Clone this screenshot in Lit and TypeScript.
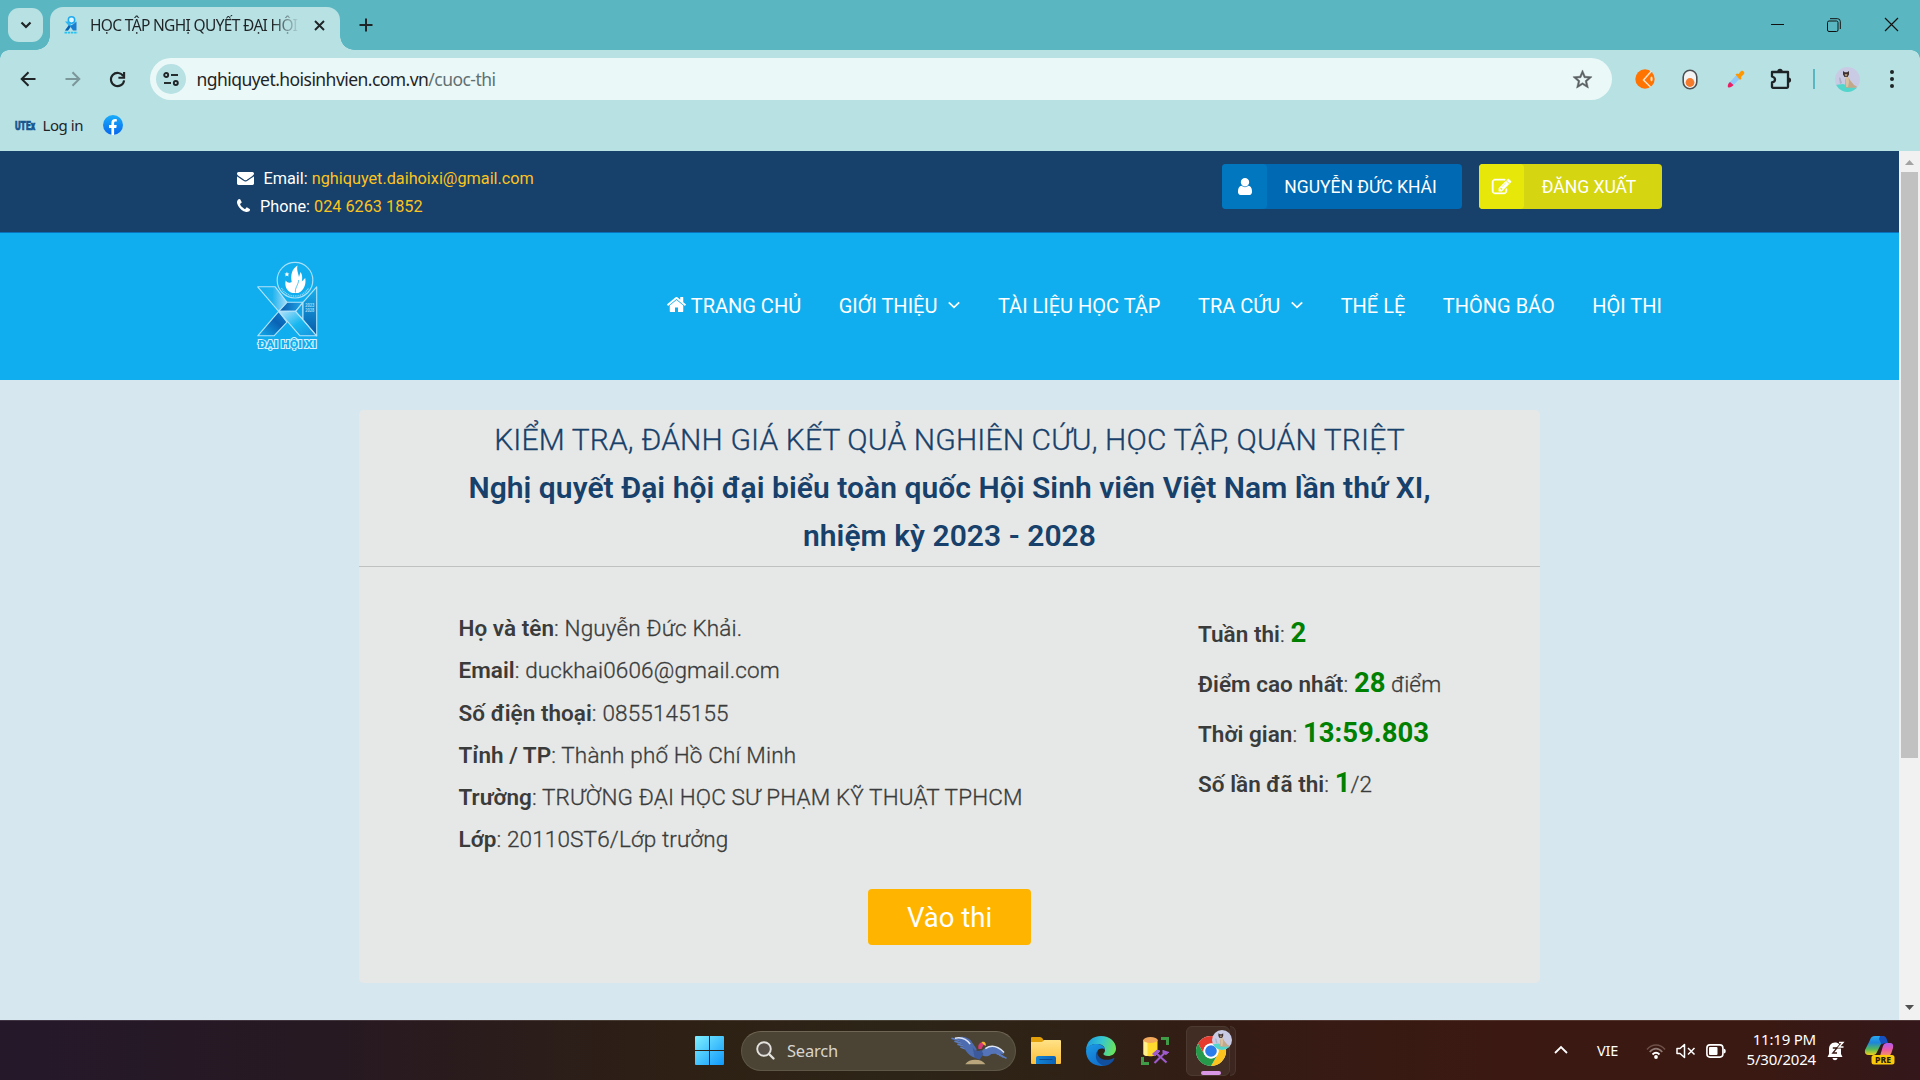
import { LitElement, html, svg, css } from "lit";
import { customElement } from "lit/decorators.js";

/* ---------- shared drawings ---------- */

const FA = {
  envelope:
    "M1792 710v794q0 66-47 113t-113 47h-1472q-66 0-113-47t-47-113v-794q44 49 101 87 362 246 497 345 57 42 92.5 65.5t94.5 48 110 24.5h2q51 0 110-24.5t94.5-48 92.5-65.5q170-123 498-345 57-39 100-87zm0-294q0 79-49 151t-122 123q-376 261-468 325-10 7-42.5 31t-54 38.5-52 32.5-57.5 27-50 9h-2q-23 0-50-9t-57.5-27-52-32.5-54-38.5-42.5-31q-91-64-262-182.5t-205-142.5q-62-42-117-115.5t-55-136.5q0-78 41.5-130t118.5-52h1472q65 0 112.5 47t47.5 113z",
  phone:
    "M1600 1240q0 27-10 70.5t-21 68.5q-21 50-122 106-94 51-186 51-27 0-52.5-3.5t-57.5-12.5-47.5-14.5-55.5-20.5-49-18q-98-35-175-83-128-79-264.5-215.5t-215.5-264.5q-48-77-83-175-3-9-18-49t-20.5-55.5-14.5-47.5-12.5-57.5-3.5-52.5q0-92 51-186 56-101 106-122 25-11 68.5-21t70.5-10q14 0 21 3 18 6 53 76 11 19 30 54t35 63.5 31 53.5q3 4 17.5 25t21.5 35.5 7 28.5q0 20-28.5 50t-62 55-62 53-28.5 46q0 9 5 22.5t8.5 20.5 14 24 11.5 19q76 137 174 235t235 174q2 1 19 11.5t24 14 20.5 8.5 22.5 5q18 0 46-28.5t53-62 55-62 50-28.5q14 0 28.5 7t35.5 21.5 25 17.5q25 15 53.5 31t63.5 35 54 30q70 35 76 53 3 7 3 21z",
  user:
    "M1536 1399q0 109-62.5 187t-150.5 78h-854q-88 0-150.5-78t-62.5-187q0-85 8.5-160.5t31.5-152 58.5-131 94-89 134.5-34.5q131 128 313 128t313-128q76 0 134.5 34.5t94 89 58.5 131 31.5 152 8.5 160.5zm-256-887q0 159-112.5 271.5t-271.5 112.5-271.5-112.5-112.5-271.5 112.5-271.5 271.5-112.5 271.5 112.5 112.5 271.5z",
  edit:
    "M888 1184l116-116-152-152-116 116v56h96v96h56zm440-720q-16-16-33 1l-350 350q-17 17-1 33t33-1l350-350q17-17 1-33zm80 594v190q0 119-84.5 203.5t-203.5 84.5h-832q-119 0-203.5-84.5t-84.5-203.5v-832q0-119 84.5-203.5t203.5-84.5h832q63 0 117 25 15 7 18 23 3 17-9 29l-49 49q-14 14-32 8-23-6-45-6h-832q-66 0-113 47t-47 113v832q0 66 47 113t113 47h832q66 0 113-47t47-113v-126q0-13 9-22l64-64q15-15 35-7t20 29zm-96-738l288 288-672 672h-288v-288zm444 132l-92 92-288-288 92-92q28-28 68-28t68 28l152 152q28 28 28 68t-28 68z",
  home:
    "M1472 992v480q0 26-19 45t-45 19h-384v-384h-256v384h-384q-26 0-45-19t-19-45v-480q0-1 .5-3t.5-3l575-474 575 474q1 2 1 6zm223-69l-62 74q-8 9-21 11h-3q-13 0-21-7l-692-577-692 577q-12 8-24 7-13-2-21-11l-62-74q-8-10-7-23.5t11-21.5l719-599q32-26 76-26t76 26l244 204v-195q0-14 9-23t23-9h192q14 0 23 9t9 23v408l219 182q10 8 11 21.5t-7 23.5z",
};

const catAvatar = (size: number) => html`<svg width=${size} height=${size} viewBox="0 0 25 25">
  <defs><clipPath id="av"><circle cx="12.5" cy="12.5" r="12.5" /></clipPath></defs>
  <g clip-path="url(#av)">
    <rect width="25" height="25" fill="#c9cbe4" />
    <path d="M0 18 8 17l9 3 8 1v4H0z" fill="#52d6cb" />
    <path d="M10 13c1-3 4-3 5 0 1 2 3 3 4 5 1 1 3 1 3 2 0 1-8 1-12 .5z" fill="#c2a98b" />
    <path d="M10.500 9c1 0 2.500 0 3 1l.5 5-1 5h-2z" fill="#d8c2a2" />
    <path d="M8 4l1.800 1.300h2.400L14 4v3.500l-1.500 2.500h-3L8 7.500z" fill="#3f3231" />
    <path d="M9.700 7h2.700l-.4 2.200h-1.900z" fill="#a98e72" />
    <path d="M4 11c1-1 2 0 2 2l1 3-2 1z" fill="#aeb0c8" />
  </g>
</svg>`;

/* ---------- browser window frame ---------- */

@customElement("browser-chrome")
class BrowserChrome extends LitElement {
  static styles = css`
    :host {
      display: block;
      height: 151px;
      background: #b8e1e4;
      font-family: "Noto Sans", "Open Sans", sans-serif;
      color: #1f2426;
    }
    svg { display: block; flex: none; overflow: visible; }
    .strip {
      height: 50px;
      display: flex;
      background: #5ab7c1;
    }
    .search-tabs {
      width: 35px;
      height: 34px;
      margin: 8px 7px 0 8px;
      border-radius: 11px;
      background: #b8e1e4;
      display: grid;
      place-items: center;
    }
    .tab {
      position: relative;
      box-sizing: border-box;
      width: 290px;
      height: 43px;
      margin-top: 7px;
      padding: 0 15px 7px 14px;
      border-radius: 13px 13px 0 0;
      background: #b8e1e4;
      display: flex;
      align-items: center;
    }
    .tab::before, .tab::after {
      content: "";
      position: absolute;
      bottom: 0;
      width: 14px;
      height: 14px;
    }
    .tab::before {
      left: -14px;
      background: radial-gradient(circle at 0 0, transparent 13.5px, #b8e1e4 14px);
    }
    .tab::after {
      right: -14px;
      background: radial-gradient(circle at 100% 0, transparent 13.5px, #b8e1e4 14px);
    }
    .title {
      width: 210px;
      margin-left: 12px;
      margin-right: 15px;
      white-space: nowrap;
      font-size: 15.5px;
      line-height: 26px;
      letter-spacing: -0.66px;
      -webkit-mask-image: linear-gradient(90deg, #000 182px, transparent 210px);
      mask-image: linear-gradient(90deg, #000 182px, transparent 210px);
    }
    .plus { margin: 18px 0 0 18.5px; }
    .controls { margin-left: auto; display: flex; height: 49px; }
    .controls div { width: 57px; display: grid; place-items: center; }
    .controls .restore { padding-right: 2px; width: 55px; }
    .bar {
      position: relative;
      height: 58px;
      padding-left: 5px;
      display: flex;
      align-items: center;
    }
    .corners {
      position: absolute;
      inset: 0 0 auto 0;
      height: 9px;
      background:
        radial-gradient(circle at 9px 9px, transparent 8.5px, #5ab7c1 9px) left / 9px 9px no-repeat,
        radial-gradient(circle at 0 9px, transparent 8.5px, #5ab7c1 9px) right / 9px 9px no-repeat;
    }
    .btn { width: 45px; height: 45px; display: grid; place-items: center; flex: none; }
    .omni {
      box-sizing: border-box;
      width: 1462px;
      height: 42px;
      margin: 0 10px;
      padding: 0 18px 0 6px;
      border-radius: 21px;
      background: #ebf8f8;
      display: flex;
      align-items: center;
      font-size: 17.5px;
      flex: none;
    }
    .site {
      width: 30px;
      height: 30px;
      border-radius: 50%;
      background: #b8e1e4;
      display: grid;
      place-items: center;
    }
    .url { margin-left: 10.5px; letter-spacing: -0.55px; line-height: 30px; }
    .path { color: #5f7072; }
    .star { margin-left: auto; }
    .ext { width: 45.5px; display: grid; place-items: center; flex: none; }
    .sep { width: 2px; height: 20px; margin: 0 20px 0 9px; background: #5ab7c1; }
    .menu { margin-left: 22px; }
    .marks {
      height: 34px;
      padding-left: 15px;
      display: flex;
      align-items: center;
      font-size: 15px;
    }
    .log { margin: 0 20px 0 6.5px; letter-spacing: -0.45px; line-height: 24px; }
  `;

  render() {
    return html`
      <div class="strip">
        <div class="search-tabs">
          <svg width="12" height="8" viewBox="0 0 12 8"><path d="M1.500 1.500 6 6l4.500-4.500" fill="none" stroke="#1f2426" stroke-width="2.200" /></svg>
        </div>
        <div class="tab">
          <svg width="14" height="18" viewBox="0 0 14 18">
            <circle cx="7.500" cy="4" r="3.200" fill="#dff5ff" stroke="#1fa9ef" stroke-width="1.500" />
            <path d="M1 5.500h3.500l3 4L4 14.500H1l3.500-5z" fill="#2fb6f2" />
            <path d="M12.500 5.500v9h-3.500L6 10l3.500-2z" fill="#1a7fd0" />
            <path d="M1 14.500h3l2.500-3.500-1.500-2z" fill="#0d5fae" />
            <path d="M.5 16.700h13" stroke="#25c1f3" stroke-width="1.800" stroke-dasharray="2.500 .7" />
          </svg>
          <div class="title">HỌC TẬP NGHỊ QUYẾT ĐẠI HỘI</div>
          <svg width="11" height="11" viewBox="0 0 11 11"><path d="M1 1l9 9M10 1l-9 9" stroke="#1f2426" stroke-width="1.900" /></svg>
        </div>
        <svg class="plus" width="14" height="14" viewBox="0 0 14 14"><path d="M7 .5v13M.5 7h13" stroke="#1f2426" stroke-width="2" /></svg>
        <div class="controls">
          <div><svg width="13" height="13"><path d="M0 6.500h13" stroke="#111" /></svg></div>
          <div class="restore">
            <svg width="14" height="14" viewBox="0 0 14 14" fill="none" stroke="#111">
              <rect x=".5" y="3" width="10.500" height="10.500" rx="1.500" />
              <path d="M3 .7h7.500a2.800 2.800 0 0 1 2.800 2.800V11" />
            </svg>
          </div>
          <div><svg width="13" height="13"><path d="M0 0l13 13M13 0 0 13" stroke="#111" stroke-width="1.150" /></svg></div>
        </div>
      </div>

      <div class="bar">
        <div class="corners"></div>
        <div class="btn">
          <svg width="16" height="16" viewBox="0 0 16 16"><path d="M15.500 8H2M8.500 1.200 1.700 8l6.800 6.800" fill="none" stroke="#1f2426" stroke-width="2" /></svg>
        </div>
        <div class="btn">
          <svg width="16" height="16" viewBox="0 0 16 16"><path d="M.5 8H14M7.500 1.200 14.300 8l-6.800 6.800" fill="none" stroke="#7b9799" stroke-width="2" /></svg>
        </div>
        <div class="btn">
          <svg width="17" height="17" viewBox="0 0 17 17">
            <path d="M14.300 5.300A6.600 6.600 0 1 0 15.100 9.300" fill="none" stroke="#1f2426" stroke-width="2.100" />
            <path d="M15.100 1v5.700H9.400" fill="none" stroke="#1f2426" stroke-width="2.100" />
          </svg>
        </div>
        <div class="omni">
          <div class="site">
            <svg width="16" height="14" viewBox="0 0 16 14" fill="none" stroke="#1f2426" stroke-width="1.900">
              <circle cx="3.200" cy="3" r="2" /><path d="M8 3h7" />
              <circle cx="12.800" cy="11" r="2" /><path d="M1 11h7" />
            </svg>
          </div>
          <div class="url">nghiquyet.hoisinhvien.com.vn<span class="path">/cuoc-thi</span></div>
          <svg class="star" width="23" height="23" viewBox="0 0 24 24">
            <path d="M22 9.240l-7.190-.62L12 2 9.190 8.630 2 9.240l5.460 4.730L5.820 21 12 17.270 18.180 21l-1.630-7.030L22 9.240zM12 15.400l-3.760 2.270 1-4.280-3.320-2.880 4.380-.38L12 6.100l1.710 4.040 4.380.38-3.320 2.880 1 4.280L12 15.400z" fill="#5b6062" stroke="#5b6062" stroke-width=".5" />
          </svg>
        </div>
        <div class="ext">
          <svg width="20" height="20" viewBox="0 0 20 20">
            <circle cx="10" cy="10" r="9.700" fill="#ff7300" />
            <path d="M16.500 2 8.500 11l7 7" fill="none" stroke="#ffe3c8" stroke-width="1.500" />
            <ellipse cx="16.500" cy="10" rx="1.100" ry="2.400" fill="#ffe3c8" />
          </svg>
        </div>
        <div class="ext">
          <svg width="16" height="21" viewBox="0 0 16 21">
            <rect x="1.200" y="1.200" width="13.600" height="18.600" rx="6.800" fill="#f3f3f3" stroke="#4d5052" stroke-width="1.600" />
            <circle cx="8" cy="13.500" r="4.400" fill="#f47a2c" />
          </svg>
        </div>
        <div class="ext">
          <svg width="18" height="18" viewBox="0 0 18 18">
            <path d="M2.500 12.500 9.500 5l3.500 3.500-7 7z" fill="#90caf9" />
            <path d="M1 17.200c-.8-1.500.3-4 2-5.200L6.500 15C5 17 2.500 18 1 17.200z" fill="#e91e63" />
            <path d="M8.500 4.500 10 3.500l1.500.5 2.500-3c1.500-1.200 4.300 1 3 3l-3 3 .5 1.500-1.500 1.500z" fill="#ff9800" />
          </svg>
        </div>
        <div class="ext">
          <svg width="22" height="22" viewBox="0 0 22 22">
            <path d="M2 4h16v14.800c0 .6-.4 1-1 1H3c-.6 0-1-.4-1-1v-4.300c4-.8 4-5 0-6z" fill="none" stroke="#1f2426" stroke-width="2.300" stroke-linejoin="round" />
            <path d="M7.300 3.500a2.700 2.700 0 0 1 5.400 0zM18.500 9.500a2.600 2.600 0 0 1 0 5.200z" fill="#1f2426" />
          </svg>
        </div>
        <div class="sep"></div>
        ${catAvatar(25)}
        <svg class="menu" width="20" height="20" viewBox="0 0 20 20" fill="#1f2426">
          <circle cx="10" cy="3" r="2" /><circle cx="10" cy="10" r="2" /><circle cx="10" cy="17" r="2" />
        </svg>
      </div>

      <div class="marks">
        <svg width="21" height="14" viewBox="0 0 21 14">
          <text x="0" y="12" font-family="Roboto, sans-serif" font-size="12" font-weight="900" fill="#17568f" stroke="#17568f" stroke-width=".7" textLength="20" lengthAdjust="spacingAndGlyphs">UTEx</text>
        </svg>
        <span class="log">Log in</span>
        <svg width="20" height="20" viewBox="0 0 20 20">
          <defs><linearGradient id="fb" x2="0" y2="1"><stop stop-color="#19aefb" /><stop offset="1" stop-color="#0866ee" /></linearGradient></defs>
          <circle cx="10" cy="10" r="10" fill="url(#fb)" />
          <path d="M8.400 20v-7H6v-2.900h2.400V8c0-2.600 1.400-4 3.700-4 .8 0 1.700.2 1.700.2v2.400h-1.300c-1.100 0-1.400.7-1.400 1.400v2.100h2.600L13.300 13h-2.200v7z" fill="#fff" />
        </svg>
      </div>
    `;
  }
}

/* ---------- web page ---------- */

type NavItem = { label: string; home?: boolean; menu?: boolean };

const NAV: NavItem[] = [
  { label: "TRANG CHỦ", home: true },
  { label: "GIỚI THIỆU", menu: true },
  { label: "TÀI LIỆU HỌC TẬP" },
  { label: "TRA CỨU", menu: true },
  { label: "THỂ LỆ" },
  { label: "THÔNG BÁO" },
  { label: "HỘI THI" },
];

const PROFILE: [string, string][] = [
  ["Họ và tên", "Nguyễn Đức Khải."],
  ["Email", "duckhai0606@gmail.com"],
  ["Số điện thoại", "0855145155"],
  ["Tỉnh / TP", "Thành phố Hồ Chí Minh"],
  ["Trường", "TRƯỜNG ĐẠI HỌC SƯ PHẠM KỸ THUẬT TPHCM"],
  ["Lớp", "20110ST6/Lớp trưởng"],
];

const RESULTS: [string, string, string][] = [
  ["Tuần thi", "2", ""],
  ["Điểm cao nhất", "28", " điểm"],
  ["Thời gian", "13:59.803", ""],
  ["Số lần đã thi", "1", "/2"],
];

@customElement("site-page")
class SitePage extends LitElement {
  static styles = css`
    :host {
      display: flex;
      height: 869px;
      background: #d7e7ef;
      font-family: Roboto, sans-serif;
    }
    svg { display: block; flex: none; overflow: visible; }
    .page { width: 1899px; }
    .top {
      box-sizing: border-box;
      height: 82px;
      padding: 13px 237px 0;
      background: #17406a;
      border-bottom: 1px solid #0a72bd;
      display: flex;
      justify-content: space-between;
      color: #fff;
      font-size: 16.25px;
    }
    .contact { height: 28px; display: flex; align-items: center; white-space: pre; }
    .contact span { color: #fcc41c; }
    .mail { margin-right: 9.5px; }
    .tel { margin-right: 10px; }
    .account { display: flex; gap: 17px; }
    .pill {
      height: 45px;
      border-radius: 4px;
      display: flex;
      align-items: center;
      font-size: 17.5px;
    }
    .pill .ico {
      width: 45px;
      height: 45px;
      border-radius: 4px;
      display: grid;
      place-items: center;
    }
    .pill .txt { flex: 1; text-align: center; padding-right: 8px; white-space: nowrap; }
    .user { width: 240px; background: #0069b3; }
    .user .ico { background: #0077bf; }
    .out { width: 183px; background: #d5d611; }
    .out .ico { background: #e7e80a; }
    .out .ico svg { margin-right: 1px; }
    .nav {
      box-sizing: border-box;
      height: 147px;
      padding: 0 237px 0 257px;
      background: #10aeee;
      display: flex;
      justify-content: space-between;
      align-items: center;
      color: #fff;
      font-size: 20px;
    }
    .links { display: flex; gap: 37.500px; white-space: nowrap; padding-bottom: 2px; }
    .item { display: flex; align-items: center; line-height: 28px; }
    .item.with-icon { padding-top: 1px; }
    .home { margin: -3px 5px 0 0; }
    .drop { margin: -2px 0 0 11px; }
    .card {
      width: 1181px;
      height: 573px;
      margin: 30px 0 0 359px;
      border-radius: 5px;
      background: #e6e8e7;
      color: #3a3b3b;
    }
    .head {
      box-sizing: border-box;
      height: 157px;
      padding-top: 6px;
      border-bottom: 1px solid #bfc1c1;
      text-align: center;
      color: #17406a;
      font-size: 30px;
      line-height: 48px;
      font-weight: 300;
      letter-spacing: 0.15px;
      -webkit-text-stroke: 0.3px #17406a;
    }
    .head b { display: block; font-weight: 600; letter-spacing: 0.04px; -webkit-text-stroke: 0; }
    .body {
      display: flex;
      justify-content: space-between;
      padding: 40px 99px 0 99.500px;
      font-size: 22.5px;
      font-weight: 300;
      letter-spacing: 0.15px;
      -webkit-text-stroke: 0.3px #3a3b3b;
      white-space: pre;
    }
    .body b { font-weight: 600; letter-spacing: 0.03px; -webkit-text-stroke: 0; }
    .profile { line-height: 42.250px; }
    .results { width: 243px; line-height: 50.250px; padding-top: 1.500px; }
    .results .num { font-size: 27.5px; font-weight: 700; letter-spacing: 0; -webkit-text-stroke: 0; color: #008000; line-height: 1; }
    .start {
      width: 163px;
      height: 56px;
      margin: 28px auto 0;
      border-radius: 4px;
      background: #ffb500;
      color: #fff;
      font-size: 27.5px;
      line-height: 57px;
      text-align: center;
    }
    .scroll {
      width: 21px;
      background: #f1f1f1;
      display: flex;
      flex-direction: column;
      align-items: center;
    }
    .up { margin-top: 9px; }
    .thumb { width: 17px; height: 586px; margin-top: 7px; background: #c1c1c1; }
    .down { margin: auto 0 10px; }
  `;

  private logo() {
    return html`<svg width="61" height="90" viewBox="0 0 61 90">
      <defs>
        <linearGradient id="a" x2="1"><stop stop-color="#10aeee" /><stop offset=".5" stop-color="#1db3ef" /><stop offset="1" stop-color="#a8dcf8" /></linearGradient>
        <linearGradient id="b" x1="0" y1="1" x2="1" y2="0"><stop stop-color="#10aeee" /><stop offset=".6" stop-color="#0a62b4" /><stop offset="1" stop-color="#0e83cf" /></linearGradient>
        <linearGradient id="c" x2="1" y2="1"><stop stop-color="#b5e2fa" /><stop offset=".5" stop-color="#19b8f0" /><stop offset="1" stop-color="#1492dc" /></linearGradient>
        <linearGradient id="d" x2="0" y2="1"><stop stop-color="#18b3ef" /><stop offset="1" stop-color="#0758a8" /></linearGradient>
        <linearGradient id="e" x2="1"><stop stop-color="#0856a8" /><stop offset="1" stop-color="#22a9ea" /></linearGradient>
      </defs>
      <g stroke="#b4e4fa" stroke-width="1.100" stroke-linejoin="round">
        <path d="M.7 24.800h17.500L30 40.300l-8.300 9z" fill="url(#a)" />
        <path d="M21.700 49.300 30 60.200 17 73.800H.7z" fill="url(#b)" />
        <path d="M30 40.300h16l-7.300 9h-17z" fill="url(#e)" />
        <path d="M21.700 49.300h17l21 24.500H43z" fill="url(#c)" />
        <path d="M46 40.300v17.300l-7.300-8.300z" fill="#12a5e8" />
        <path d="M59.700 24.800 46 40.300v17.300l13.700 16.200z" fill="url(#d)" />
      </g>
      <circle cx="38" cy="18.200" r="17.800" fill="#10aeee" stroke="#a9e0f9" stroke-width="1.200" />
      <path d="M24.500 26a15.300 15.300 0 0 0 27 0" fill="none" stroke="#8fd8f8" stroke-width="1.500" stroke-dasharray="1 .8" />
      <path d="M28.700 18.500c1.500 2.300 4 2.800 6 1.500C33.500 13.500 34.500 7 40.500 3.500c-1 4.500.8 7.500 1.500 11.500l1.500-5c2.300 3.500 1.800 7 1.300 9.500l3.400-3.500c1.300 6-1.200 12.500-7 15h-6c-5-1.500-8-6.500-6.500-12.500z" fill="#fff" />
      <path d="M38.500 30.500c-1-4 3-8 3.200-12.500" fill="none" stroke="#10aeee" stroke-width=".7" />
      <path d="m29.900 9.800.8 1.600 1.700.2-1.300 1.200.4 1.700-1.600-.9-1.500.9.3-1.700-1.200-1.200 1.700-.2z" fill="#fff" />
      <g font-family="Roboto, sans-serif" font-weight="700" fill="#a5daf6">
        <text x="48.200" y="44.700" font-size="5.200" textLength="9" lengthAdjust="spacingAndGlyphs">2023</text>
        <text x="48.200" y="50.200" font-size="5.200" textLength="9" lengthAdjust="spacingAndGlyphs">2028</text>
      </g>
      <text x="1" y="85.800" font-family="Roboto, sans-serif" font-weight="900" font-size="10.500" fill="#10aeee" stroke="#d5f1fd" stroke-width="1.900" paint-order="stroke" textLength="58.500" lengthAdjust="spacingAndGlyphs">ĐẠI HỘI XI</text>
    </svg>`;
  }

  private navItem(n: NavItem) {
    return html`<div class=${n.home || n.menu ? "item with-icon" : "item"}>
      ${n.home ? html`<svg class="home" width="19" height="15" viewBox="90 256 1612 1280" fill="#fff"><path d=${FA.home} /></svg>` : ""}
      <span>${n.label}</span>
      ${n.menu ? html`<svg class="drop" width="12" height="8" viewBox="0 0 12 8"><path d="M.8 1.300l5.200 5 5.200-5" fill="none" stroke="#fff" stroke-width="1.800" /></svg>` : ""}
    </div>`;
  }

  render() {
    return html`
      <div class="page">
        <div class="top">
          <div>
            <div class="contact"><svg class="mail" width="17" height="13" viewBox="0 256 1792 1408" preserveAspectRatio="none" fill="#fff"><path d=${FA.envelope} /></svg>Email: <span>nghiquyet.daihoixi@gmail.com</span></div>
            <div class="contact"><svg class="tel" width="13" height="13" viewBox="192 228 1408 1408" fill="#fff"><path d=${FA.phone} /></svg>Phone: <span>024 6263 1852</span></div>
          </div>
          <div class="account">
            <div class="pill user">
              <div class="ico"><svg width="14" height="17" viewBox="256 128 1280 1536" fill="#fff"><path d=${FA.user} /></svg></div>
              <div class="txt">NGUYỄN ĐỨC KHẢI</div>
            </div>
            <div class="pill out">
              <div class="ico"><svg width="19" height="15" viewBox="0 128 1784 1408" fill="#fff" stroke="#fff" stroke-width="40"><path d=${FA.edit} /></svg></div>
              <div class="txt">ĐĂNG XUẤT</div>
            </div>
          </div>
        </div>
        <div class="nav">
          ${this.logo()}
          <div class="links">${NAV.map((n) => this.navItem(n))}</div>
        </div>
        <div class="card">
          <div class="head">
            KIỂM TRA, ĐÁNH GIÁ KẾT QUẢ NGHIÊN CỨU, HỌC TẬP, QUÁN TRIỆT
            <b>Nghị quyết Đại hội đại biểu toàn quốc Hội Sinh viên Việt Nam lần thứ XI,</b>
            <b>nhiệm kỳ 2023 - 2028</b>
          </div>
          <div class="body">
            <div class="profile">${PROFILE.map(([k, v]) => html`<div><b>${k}</b>: ${v}</div>`)}</div>
            <div class="results">${RESULTS.map(([k, v, t]) => html`<div><b>${k}</b>: <span class="num">${v}</span>${t}</div>`)}</div>
          </div>
          <div class="start">Vào thi</div>
        </div>
      </div>
      <div class="scroll">
        <svg class="up" width="9" height="5" viewBox="0 0 9 5"><path d="M4.500 0 9 5H0z" fill="#a3a3a3" /></svg>
        <div class="thumb"></div>
        <svg class="down" width="9" height="5" viewBox="0 0 9 5"><path d="M0 0h9L4.500 5z" fill="#505050" /></svg>
      </div>
    `;
  }
}

/* ---------- desktop taskbar ---------- */

@customElement("task-bar")
class TaskBar extends LitElement {
  static styles = css`
    :host {
      box-sizing: border-box;
      display: flex;
      align-items: center;
      height: 60px;
      border-top: 1px solid rgba(255, 255, 255, 0.13);
      background: linear-gradient(90deg, #25182a 0, #271921 340px, #2e2014 680px, #2c2517 900px, #2f2115 1080px, #341b14 1240px, #3b1912 1500px, #3a1912 1760px, #33171a 1920px);
      font-family: "Noto Sans", "Open Sans", sans-serif;
      font-size: 15px;
      color: #fff;
    }
    svg { display: block; flex: none; overflow: visible; }
    .win { margin-left: 695px; }
    .search {
      box-sizing: border-box;
      width: 275px;
      height: 40px;
      margin: 0 15px 0 17px;
      padding: 0 6px 0 14px;
      border: 1px solid #5e5646;
      border-top-color: #706655;
      border-radius: 20px;
      background: #4b4434;
      display: flex;
      align-items: center;
      color: #d8d5cf;
    }
    .search span { margin: 0 auto 0 12px; font-size: 16.500px; line-height: 24px; letter-spacing: -0.2px; }
    .edge { margin-left: 25px; }
    .db { margin: 0 16px 0 25px; }
    .chrome {
      position: relative;
      box-sizing: border-box;
      width: 44px;
      height: 50px;
      border-radius: 6px;
      background: #412d24;
      border: 1px solid #4c3a31;
    }
    .behind {
      box-sizing: border-box;
      width: 6px;
      height: 50px;
      border: 1px solid #48362d;
      border-left: 0;
      border-radius: 0 6px 6px 0;
      background: #3c261f;
    }
    .chrome .logo { position: absolute; left: 9px; top: 9px; }
    .badge { position: absolute; left: 25px; top: 3px; }
    .mark {
      position: absolute;
      left: 14px;
      top: 44px;
      width: 20px;
      height: 4px;
      border-radius: 2px;
      background: #d998e4;
    }
    .chev { margin-left: 318px; margin-top: -2px; }
    .lang { margin-left: 29px; width: 49px; font-size: 14.500px; letter-spacing: -0.2px; padding-bottom: 2px; }
    .vol { margin-left: 10px; }
    .bat { margin-left: 10px; }
    .clock { width: 90px; text-align: right; line-height: 20px; letter-spacing: -0.2px; white-space: nowrap; font-size: 15px; padding-bottom: 4px; }
    .bell { margin-left: 11px; }
    .pre { margin-left: 20px; }
  `;

  private feathers() {
    return [0, 1, 2, 3].map(
      (i) => svg`<path d="M${19 - i} ${8 + i * 2}L${1.5 + i * 3} ${3 + i * 3}M${42 + i * 1.5} ${15 - i * 0.2}L${57.5 - i * 3} ${23.5 - i * 1.2}" stroke="#5b7cc0" stroke-width="1.700" />`
    );
  }

  render() {
    return html`
      <svg class="win" width="29" height="29" viewBox="0 0 29 29">
        <defs><linearGradient id="wg" gradientUnits="userSpaceOnUse" x1="0" y1="0" x2="29" y2="29"><stop stop-color="#7eefff" /><stop offset="1" stop-color="#0f98fb" /></linearGradient></defs>
        <path d="M0 1q0-1 1-1h13v14H0zM15 0h13q1 0 1 1v13H15zM0 15h14v14H1q-1 0-1-1zM15 15h14v13q0 1-1 1H15z" fill="url(#wg)" />
      </svg>
      <div class="search">
        <svg width="19" height="19" viewBox="0 0 19 19" fill="none" stroke="#e3e1dd" stroke-linecap="round"><circle cx="8" cy="8" r="6.800" stroke-width="1.900" fill="#57514a" /><path d="m13 13 4.500 4.500" stroke-width="2.400" /></svg>
        <span>Search</span>
        <svg width="59" height="31" viewBox="0 0 60 31">
          ${this.feathers()}
          <path d="M7 2.500c5-2 10-1 14 2.500l6 9-1 9c-6-1-10-6-13-13z" fill="#4d6cb0" />
          <path d="M31 18c4-6 9-8 14-6.500 4 1 8 4 10 8-5-1.500-9-.5-13-.5-3 3-7 3.500-11 0z" fill="#5574b8" />
          <path d="M5 3c7-1.500 12 1 15.500 6M36 13.500c6-4 13-2 19 4" fill="none" stroke="#dfe6f5" stroke-width="1.500" />
          <path d="M23 12c2 4 5 5 9 3l2 4-4 6-5-2z" fill="#3c599b" />
          <path d="M29 14c-1-4 1-7 4-7l1 3-2 4z" fill="#d83a78" /><path d="M32 7c3-1.200 5 .5 4.300 4l-2.300-1.500z" fill="#f3b431" />
          <path d="M15.500 29.500c2-3 6-4.500 10-4.500 5 0 8 1.500 10.500 4.500z" fill="#b9a67d" />
        </svg>
      </div>
      <svg width="30" height="27" viewBox="0 0 30 27">
        <defs><linearGradient id="f" x2="0" y2="1"><stop stop-color="#ffe287" /><stop offset="1" stop-color="#fcbf3a" /></linearGradient>
        <linearGradient id="fb2" x2="1"><stop stop-color="#1485d4" /><stop offset="1" stop-color="#0b62b8" /></linearGradient></defs>
        <path d="M0 1q0-1 1-1h8q1.500 0 2.500 1.500L13 4v4H0z" fill="#e2a00b" />
        <path d="M0 5h11l2-2h16q1 0 1 1v22q0 1-1 1H1q-1 0-1-1z" fill="url(#f)" />
        <path d="M5 27v-6q0-2 2-2h16q2 0 2 2v6z" fill="url(#fb2)" /><path d="M9 22.500h12" stroke="#0a4c94" stroke-width="1.200" stroke-linecap="round" />
      </svg>
      <svg class="edge" width="30" height="30" viewBox="0 0 30 30">
        <defs>
          <linearGradient id="e1" x1="0" y1=".3" x2="1" y2=".5"><stop stop-color="#1b9be0" /><stop offset=".5" stop-color="#36c6d0" /><stop offset="1" stop-color="#6be35a" /></linearGradient>
          <linearGradient id="e2" x2=".6" y2="1"><stop stop-color="#1a9be6" /><stop offset="1" stop-color="#1270cc" /></linearGradient>
        </defs>
        <path d="M0 15C0 5 7 0 15 0c9 0 15 6 15 12.500 0 5-4 7.500-8 7.500-3 0-5-1-4.500-2.500 1-1 1.500-2 1.500-3.500C19 10 15 8 11 8 5 8 1 11 0 15z" fill="url(#e1)" />
        <path d="M0 15C1 10 5 8 10.500 8c4.500 0 8.500 2.500 8.500 6-1.500-2-6-2-7.500 1-3 6 1 14 8 14.300C9 32 0 25 0 15z" fill="url(#e2)" />
        <path d="M11.500 14.500C8 20 10 27 17.500 29.800c5 0 9-3 10.800-6.800.4-.8-.3-1.200-1-.8C20 26 10 23 11.500 14.500z" fill="#114f9f" />
      </svg>
      <svg class="db" width="29" height="28" viewBox="0 0 29 28">
        <path d="M2.500 3v14c0 3 14 3 14 0V3z" fill="#ffd92e" /><path d="M2.500 3v14c0 1 1.500 2 4 2V3z" fill="#fff08a" />
        <ellipse cx="9.500" cy="3" rx="7.200" ry="3" fill="#f2a95c" />
        <path d="M20 1.500h6.500V8M1.500 20v6.500H8" fill="none" stroke="#3f9b46" stroke-width="3" />
        <path d="m14 15 12 11M24 15 13 26" stroke="#33221a" stroke-width="5" />
        <path d="m15 16 10.500 9.500M24 15.500 13.500 26" stroke="#a05ad0" stroke-width="2" /><path d="m11.500 17 4.500-4 3 1-5 5zM22 13v3l3 1.500L28 15" fill="#a05ad0" stroke="#a05ad0" stroke-width="1" />
      </svg>
      <div class="chrome">
        <svg class="logo" width="30" height="30" viewBox="0 0 48 48">
          <circle cx="24" cy="24" r="24" fill="#fff" />
          <path d="M3.200 12A24 24 0 0 1 44.800 12H24a12 12 0 0 0-10.400 18z" fill="#e53a2e" />
          <path d="M44.800 12A24 24 0 0 1 24 48l10.400-18A12 12 0 0 0 24 12z" fill="#fcc31e" />
          <path d="M24 48A24 24 0 0 1 3.200 12l10.400 18A12 12 0 0 0 34.400 30z" fill="#26994a" />
          <circle cx="24" cy="24" r="12" fill="#fff" /><circle cx="24" cy="24" r="9.300" fill="#2b7bea" />
        </svg>
        <div class="badge">${catAvatar(20)}</div>
        <div class="mark"></div>
      </div>
      <div class="behind"></div>

      <svg class="chev" width="14" height="9" viewBox="0 0 14 9"><path d="M1 8l6-6 6 6" fill="none" stroke="#fff" stroke-width="1.800" /></svg>
      <span class="lang">VIE</span>
      <svg width="20" height="16" viewBox="0 0 20 16" fill="none">
        <path d="M1 6.500c5-6 13-6 18 0" stroke="#6e5048" stroke-width="1.600" /><path d="M3.700 9c4-4.500 8.600-4.500 12.600 0" stroke="#907a74" stroke-width="1.600" />
        <path d="M6.500 11.500c2.500-2.500 4.500-2.500 7 0" stroke="#fff" stroke-width="1.800" /><circle cx="10" cy="14" r="1.900" fill="#fff" />
      </svg>
      <svg class="vol" width="20" height="16" viewBox="0 0 20 16" fill="none" stroke="#fff" stroke-width="1.500" stroke-linejoin="round">
        <path d="M1 5.500h3L8.500 1.500v13L4 10.500H1z" /><path d="m12 5 6.500 6.500M18.500 5 12 11.500" />
      </svg>
      <svg class="bat" width="20" height="14" viewBox="0 0 20 14">
        <rect x=".9" y=".9" width="16" height="12.200" rx="3" fill="none" stroke="#fff" stroke-width="1.600" /><rect x="3" y="3" width="8.500" height="8" rx="1" fill="#fff" /><path d="M17.500 4.500q2.300 0 2.300 2.500t-2.300 2.500z" fill="#fff" />
      </svg>
      <div class="clock"><div>11:19 PM</div><div>5/30/2024</div></div>
      <svg class="bell" width="18" height="20" viewBox="0 0 18 20">
        <path d="M8 1.500C4 1.500 2 4.500 2 8v5L.5 16h15L14 13V8c0-4-2.500-6.500-6-6.500zM5.500 17h5c-.5 3-4.500 3-5 0z" fill="#fff" />
        <path d="M5.800 7h4.200l-4.200 5h4.200" fill="none" stroke="#3a1912" stroke-width="1.300" />
        <path d="M12 1.500h4L12 6h4.500" fill="none" stroke="#3a1912" stroke-width="3" /><path d="M12 1.500h4L12 6h4.500M11 9.500h3" fill="none" stroke="#fff" stroke-width="1.400" />
      </svg>
      <svg class="pre" width="30" height="29" viewBox="0 0 30 29">
        <defs>
          <linearGradient id="p1" x2="0" y2="1"><stop stop-color="#2aa8ee" /><stop offset=".35" stop-color="#1c85dc" /><stop offset=".7" stop-color="#56b856" /><stop offset="1" stop-color="#f4d21c" /></linearGradient>
          <linearGradient id="p2" x2="0" y2="1"><stop stop-color="#b05cf0" /><stop offset=".5" stop-color="#ea5aa8" /><stop offset="1" stop-color="#f69a5a" /></linearGradient>
        </defs>
        <path d="M5 4q1-4 5-4h7q3 0 4 4l1 3h-3q-3 0-4 3l-3 6q-1 3-4 3H4q-5 0-4-5z" fill="url(#p1)" />
        <path d="M15 0h3q3 0 4 4l1 3h-3q-2 0-3.500 1.500L14 3z" fill="#1551c0" />
        <path d="M18 10q1-3 4-3h3q4 0 3 5l-2 6q-1 2-4 2h-7z" fill="url(#p2)" />
        <rect x="6.500" y="19" width="23" height="9.500" rx="2.500" fill="#fbc90c" />
        <text x="10" y="27" font-family="'Noto Sans', sans-serif" font-size="8.500" font-weight="800" fill="#2a1c00" textLength="16" lengthAdjust="spacingAndGlyphs">PRE</text>
      </svg>
    `;
  }
}

@customElement("app-root")
class AppRoot extends LitElement {
  static styles = css`
    :host {
      display: block;
      width: 1920px;
      height: 1080px;
      overflow: hidden;
    }
  `;
  render() {
    return html`<browser-chrome></browser-chrome><site-page></site-page><task-bar></task-bar>`;
  }
}
